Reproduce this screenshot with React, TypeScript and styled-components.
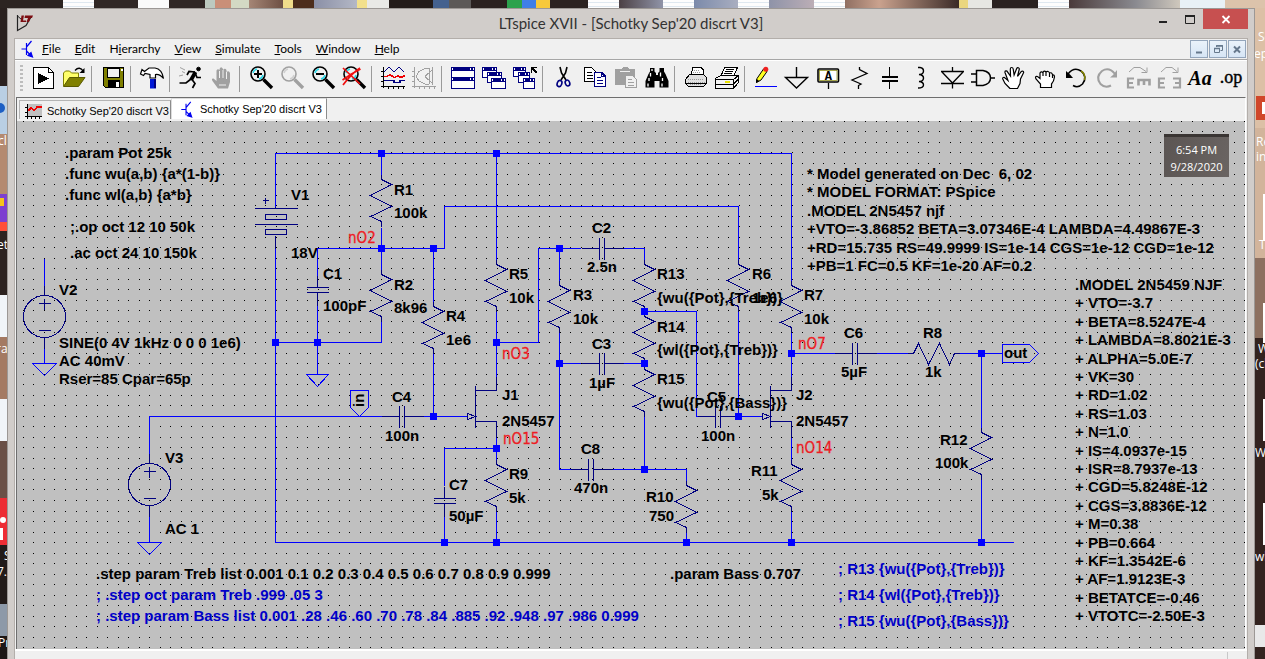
import React from "react";
import styled, { createGlobalStyle } from "styled-components";

const Global = createGlobalStyle`
  * { box-sizing: border-box; }
  body { margin: 0; background: #2b2320; font-family: "Open Sans", "Noto Sans", sans-serif; }
  button { font: inherit; color: inherit; margin: 0; padding: 0; border: 0; background: none; }
`;

/* ---------- desktop behind the window ---------- */

const Desktop = styled.div`
  display: grid;
  grid-template-columns: 7px minmax(0, 1fr) 10px;
  grid-template-rows: 8px minmax(0, 1fr);
  min-height: 100vh;
`;

const TopStrip = styled.div`
  grid-column: 1 / -1;
  display: flex;
  overflow: hidden;
`;

const Patch = styled.span<{ $span: number; $fill: string }>`
  flex: ${(p) => p.$span} 1 0;
  background: ${(p) => p.$fill};
`;

const SideStrip = styled.div`
  position: relative;
  overflow: hidden;
  svg { position: absolute; inset: 0; width: 100%; height: 100%; }
`;

const paper = "linear-gradient(#fdfdfd 0 2px, #dfe8f0 2px 3px, #fdfdfd 3px 6px, #dfe8f0 6px 7px, #fdfdfd 7px)";
const patches: [number, string][] = [
  [63, "#2c2421"], [31, paper], [44, "#302725"], [31, "#fafafa"], [36, "#2f2624"],
  [10, "#bcc9bf"], [16, "#c98f78"], [18, "#d3d9c4"], [34, "linear-gradient(90deg,#a58676,#6d4f43)"], [10, "#f0dc8a"], [21, "#4c2d1c"],
  [43, "linear-gradient(90deg,#8a8fa6,#b4b8c6)"], [10, "#f2e08c"], [22, "#e9e9e6"],
  [44, "#241c1a"], [16, "#44618e"], [22, "#5c5957"], [36, "#2a211f"],
  [15, "#2ba24c"], [14, "#3f7fe8"], [14, "#f7c93b"], [37, "#2b2220"],
  [31, paper], [44, "linear-gradient(90deg,#4b4044,#9094a8)"], [31, paper], [44, "linear-gradient(90deg,#7b8aaa,#a9aec0)"],
  [31, paper], [45, "linear-gradient(90deg,#8e93a8,#bcaeb6)"], [31, paper],
  [114, "linear-gradient(90deg,#8f6f62,#caa28e 30%,#3a2a26)"], [9, "#ead67f"], [24, "#e6e6e2"], [46, "#2a2220"], [31, paper],
  [111, "linear-gradient(90deg,#4a3a3a,#8a8a90 60%,#cfc8bd)"], [45, "#e8f1f6"], [40, "#dcc3ab"],
];

const DesktopText = styled.text`
  font: 12px "Open Sans", sans-serif;
  fill: #fff;
`;

function LeftEdge() {
  return (
    <svg aria-hidden="true">
      <rect width="7" height="78" fill="#2a211f" />
      <rect y="78" width="7" height="48" fill="#b9cfe4" />
      <circle cx="0" cy="100" r="5" fill="#1c5fc4" />
      <rect y="126" width="7" height="60" fill="#b48a70" />
      <rect y="186" width="7" height="40" fill="#7d3fd0" />
      <rect y="190" width="4" height="8" fill="#f5c21b" />
      <rect y="214" width="7" height="9" fill="#ff4f3a" />
      <rect y="223" width="7" height="64" fill="#2d2320" />
      <rect y="287" width="7" height="42" fill="#f1f5f9" />
      <rect y="329" width="7" height="62" fill="#a47a62" />
      <rect y="391" width="7" height="42" fill="#f1f5f9" />
      <rect y="433" width="7" height="57" fill="#6a5046" />
      <rect y="490" width="7" height="47" fill="#ed2d34" />
      <circle cx="3" cy="512" r="3" fill="#fff" />
      <rect y="520" width="3" height="12" fill="#fff" />
      <rect y="537" width="7" height="59" fill="#221b19" />
      <rect y="596" width="7" height="32" fill="#8d99a8" />
      <rect y="628" width="7" height="40" fill="#1d1716" />
      <DesktopText x="-2" y="137">cl</DesktopText>
      <DesktopText x="-3" y="241">et</DesktopText>
      <DesktopText x="-4" y="345">ra</DesktopText>
      <DesktopText x="4" y="552">S</DesktopText>
      <DesktopText x="-3" y="568">7.0</DesktopText>
      <DesktopText x="-2" y="639">Pr</DesktopText>
    </svg>
  );
}

function RightEdge() {
  return (
    <svg aria-hidden="true">
      <rect width="10" height="120" fill="#dcc0a6" />
      <rect y="120" width="10" height="130" fill="#d2b49b" />
      <rect y="250" width="10" height="80" fill="#8d7060" />
      <rect y="330" width="10" height="340" fill="#33231f" />
      <rect x="1" y="88" width="9" height="24" fill="#d0472a" />
      <rect x="7" y="94" width="3" height="12" fill="#fff" />
      <rect x="8" y="186" width="2" height="46" fill="#fff" />
      <rect x="8" y="295" width="2" height="40" fill="#fff" />
      <rect x="8" y="391" width="2" height="42" fill="#fff" />
      <rect x="8" y="495" width="2" height="42" fill="#fff" />
      <rect y="617" width="10" height="22" fill="#e9e9e9" />
      <DesktopText x="3" y="33">Se</DesktopText>
      <DesktopText x="-1" y="50">ep</DesktopText>
      <DesktopText x="1" y="138">Re</DesktopText>
      <DesktopText x="1" y="153">in</DesktopText>
      <DesktopText x="4" y="241">Ti</DesktopText>
      <DesktopText x="3" y="345">W</DesktopText>
      <DesktopText x="0" y="360">(cl</DesktopText>
      <DesktopText x="0" y="449">Wo</DesktopText>
      <DesktopText x="0" y="553">wh</DesktopText>
    </svg>
  );
}

/* ---------- window frame ---------- */

const Window = styled.main`
  display: flex;
  flex-direction: column;
  background: #d1cdca;
  border: 1px solid #9c9895;
  border-bottom: 0;
  padding: 0 6px;
`;

const TitleBar = styled.header`
  display: grid;
  grid-template-columns: 1fr auto 1fr;
  height: 29px;
  flex: none;
`;

const AppMark = styled.svg`
  width: 20px;
  height: 20px;
  margin: 4px 0 0 1px;
`;

const Title = styled.h1`
  margin: 0;
  font: 400 15px/29px "Lato", sans-serif;
  color: #333;
  white-space: nowrap;
`;

const WindowButtons = styled.div`
  display: flex;
  justify-content: flex-end;
  align-items: flex-start;
`;

const WindowButton = styled.button<{ $close?: boolean }>`
  width: ${(p) => (p.$close ? 45 : 27)}px;
  height: 20px;
  background: ${(p) => (p.$close ? "#c75050" : "transparent")};
  svg { display: block; margin: 0 auto; width: 20px; height: 20px; }
`;

const Client = styled.div`
  flex: 1;
  display: flex;
  flex-direction: column;
  min-height: 0;
  background: #f0f0f0;
  border: 1px solid #b3aeaa;
  border-bottom: 0;
`;

const MenuBar = styled.nav`
  display: flex;
  align-items: center;
  height: 21px;
  flex: none;
  padding: 0 1px 0 5px;
  border-bottom: 1px solid #a6a6a6;
`;

const MenuMark = styled.svg`
  width: 14px;
  height: 18px;
  margin-right: 1px;
`;

const MenuItem = styled.button`
  padding: 0 7px;
  font: 12px/18px "Lato", sans-serif;
  color: #000;
`;

const ChildButtons = styled.div`
  display: flex;
  gap: 1px;
  margin-left: auto;
`;

const ChildButton = styled.button`
  width: 18px;
  height: 18px;
  background: linear-gradient(#eaf2fa, #d6e5f5);
  border: 1px solid #93a5bb;
  svg { display: block; width: 16px; height: 16px; }
`;

const ToolBar = styled.div`
  display: flex;
  align-items: center;
  height: 37px;
  flex: none;
  border-top: 1px solid #fff;
`;

const Grip = styled.span`
  width: 3px;
  height: 28px;
  margin: 0 4px 0 5px;
  background: repeating-linear-gradient(#bdbdbd 0 2px, transparent 2px 4px);
`;

const ToolButton = styled.button`
  flex: none;
  width: 31px;
  height: 26px;
  svg { display: block; margin: 0 auto 2px; width: 24px; height: 24px; overflow: visible; }
`;

const Separator = styled.span`
  flex: none;
  width: 1px;
  height: 26px;
  margin: 0 5px 0 2px;
  background: #9a9a9a;
`;

const Sheet = styled.section`
  flex: 1;
  display: flex;
  flex-direction: column;
  margin: 0 1px;
  border-top: 1px solid #6e6e6e;
  border-left: 1px solid #6e6e6e;
  border-right: 1px solid #fff;
`;

const TabBar = styled.div`
  display: flex;
  align-items: flex-end;
  height: 23px;
  flex: none;
  padding: 0 2px 2px;
`;

const Tab = styled.button<{ $active?: boolean }>`
  display: flex;
  align-items: center;
  gap: 5px;
  height: ${(p) => (p.$active ? 21 : 19)}px;
  padding: ${(p) => (p.$active ? "0 4px 0 6px" : "2px 1px 0 5px")};
  background: ${(p) => (p.$active ? "#fff" : "#f0f0f0")};
  border: 1px solid ${(p) => (p.$active ? "#dcdcdc" : "#b4b4b4")};
  border-right-color: #8c8c8c;
  border-bottom: 0;
  font: 11px/16px "Liberation Sans", Arial, sans-serif;
  color: #000;
  white-space: nowrap;
  svg { width: 17px; height: 17px; }
`;

const Canvas = styled.div`
  position: relative;
  flex: 1;
  min-height: 527px;
  background: #c0c0c0;
  overflow: hidden;
`;

const Drawing = styled.svg`
  position: absolute;
  inset: 0;
  width: 100%;
  height: 100%;
`;

const Clock = styled.time`
  position: absolute;
  top: 13px;
  right: 16px;
  width: 65px;
  height: 43px;
  padding-top: 4px;
  border-top: 3px solid #3a3533;
  background: linear-gradient(100deg, #5b5553, #6a6462);
  color: #fff;
  font: 11px/17px "Open Sans", sans-serif;
  text-align: center;
`;

const StatusBar = styled.footer`
  display: flex;
  justify-content: flex-end;
  height: 10px;
  flex: none;
  border-top: 2px solid #fff;
  background: #f0f0f0;
`;

const StatusCell = styled.span`
  width: 20px;
  margin-top: 1px;
  border-left: 1px solid #c8c8c8;
`;

/* ---------- toolbar icons, on a 24 x 24 grid ---------- */

const K = "#000";
const NAVY = "#000080";
const OLIVE = "#808000";
const GRAY = "#a0a0a0";

const lens = (color: string, shine: string) => (
  <>
    <circle cx="9" cy="8" r="7" fill="none" stroke={color} strokeWidth="1.6" />
    <path d="M4 7a6 5 0 0 1 4-4M14 9a6 5 0 0 1-4 4" fill="none" stroke={shine} strokeWidth="1.5" />
    <path d="M14.5 13.5 23 22" stroke={color} strokeWidth="3.4" />
  </>
);

const win = (x: number, y: number, w: number, h: number) => (
  <>
    <rect x={x + 0.5} y={y + 0.5} width={w - 1} height={h - 1} fill="#fff" stroke={NAVY} />
    <rect x={x} y={y} width={w} height="4" fill={NAVY} />
    <path d={`M${x + 1.5} ${y + 1}v2M${x + w - 4.5} ${y + 1}v2M${x + w - 2} ${y + 1}v2`} stroke="#fff" />
  </>
);

const handOpen = "M8 22.5 3 17.5.8 13c-.6-1.6 1.4-2.2 2.4-.8L6 14.500 3 6.500c-.4-1.700 1.800-2.300 2.500-.6L8.500 10 8.300 3c0-2 2.600-2 2.900 0l.9 6 2.600-6.500c.7-1.600 3-.8 2.500 1l-1.700 7 3.700-4.800c1.200-1.400 3-.1 2.200 1.300L18.500 13l-.5 4.500-2.500 5z";

type Tool = { name: string; art: React.ReactNode; disabled?: boolean };

const groups: Tool[][] = [
  [
    { name: "Run", art: <g shapeRendering="crispEdges"><path d="M2.500 1.500H17.500L22.500 6.500V22.500H2.500Z" fill="#fff" stroke={K} /><path d="M17.500 1.500V6.500H22.500" fill="none" stroke={K} /><path d="M7 7 18 12.500 7 18Z" fill={K} /></g> },
    { name: "Open", art: <g><path d="M1.500 20V7l2-2h4l2 2h7v5" fill="#ffff6a" stroke={OLIVE} /><path d="M1.500 20.500 7.500 11.500H23L16.500 20.500Z" fill={OLIVE} stroke="#5a5a00" /><path d="M13 4.500Q17.500-.5 21.500 5.500" fill="none" stroke={K} strokeWidth="1.300" /><path d="M22.500 2v5h-5z" fill={K} /></g> },
  ],
  [
    { name: "Save", art: <g shapeRendering="crispEdges"><path d="M2.500 1.500H22.500V21.500H4.500L2.500 19.500Z" fill={OLIVE} stroke={K} /><rect x="6" y="2" width="12" height="9" fill="#f0f0f0" stroke={K} /><rect x="20" y="3" width="2" height="2" fill="#fff" /><rect x="7" y="14" width="12" height="8" fill={K} /><rect x="15" y="16" width="3" height="5" fill="#fff" /></g> },
  ],
  [
    { name: "Control panel", art: <g><path d="M.5 8 2 3.500 4.500 5.500 9 2H15Q22 3 23.500 12.500 20 8 15.500 8.500V12H10V8.500L5 7.500 3.500 9.500Z" fill="#fff" stroke={K} strokeWidth="1.200" /><path d="M10 13h6v9.500h-6z" fill="#0018d8" /><path d="M15 13v9" stroke={NAVY} strokeWidth="2" /></g> },
  ],
  [
    { name: "Simulate", art: <g fill="none" stroke={K}><circle cx="19.500" cy="3" r="1.800" fill={K} /><path d="M16.500 6 12 14" strokeWidth="3.800" /><path d="M16 6 10 5.500 8 9M16.500 8 18 11.500H22M12 13 7 17H.5M13 13.500 16 17.500 13.500 22" strokeWidth="1.700" /><path d="M1 1.500 6 4M3 5.500 6 7M0 10l4-1" stroke={GRAY} /></g> },
    { name: "Halt", disabled: true, art: <g><path d="M8 22.500 2.500 15Q1 12 3.500 12.500L6.500 15V4.500q1.500-2.500 3 0V3q1.500-3.500 3.500 0v1q2-2.500 3.500 0V6q2.500-2 3.500 1V16L18 22.500Z" fill={GRAY} /><path d="M9.500 5v7M13 4v8M16.500 6v7M9 19h7" stroke="#f0f0f0" /></g> },
  ],
  [
    { name: "Zoom in", art: <g>{lens(K, "#28d8e8")}<path d="M5 8h8M9 4v8" stroke={K} strokeWidth="2" /></g> },
    { name: "Pan", disabled: true, art: lens(GRAY, "#d0d0d0") },
    { name: "Zoom out", art: <g>{lens(K, "#28d8e8")}<path d="M5 8h8" stroke={K} strokeWidth="2" /></g> },
    { name: "Zoom to fit", art: <g>{lens(K, "#28d8e8")}<path d="M1 2 18 18M18 2Q10 7 1 19M.5 14l9-6 9-5" fill="none" stroke="#f01010" strokeWidth="1.700" /></g> },
  ],
  [
    { name: "Autorange", art: <g fill="none" shapeRendering="crispEdges"><path d="M2.500 1V22M0 20.500H24M0 5.500H3M0 10.500H3M0 15.500H3M7.500 20V23M12.500 20V23M17.500 20V23M22.500 20V23" stroke={K} /><path d="M3 6 8 1 13 6 18 1 23 6" stroke={NAVY} /><path d="M3 10.500H6L9 8.500 13 11.500 17 10 20 11.500 24 9.500" stroke="#f00000" strokeWidth="1.500" /><path d="M3 14.500H13V16.500H19V14.500H24" stroke={NAVY} strokeWidth="1.500" /></g> },
    { name: "FFT", disabled: true, art: <g fill="none" stroke={GRAY} shapeRendering="crispEdges"><path d="M2.500 1V22M0 20.500H24M0 5.500H3M0 10.500H3M0 15.500H3M7.500 20V23M12.500 20V23M17.500 20V23M22.500 20V23M4 10.500 7 5.500 13 2.500H17M4 10.500 7 15 13 18H17M17.500 2V18M20.500 1V19M13 10.500 20 4M13 10.500 20 17" /></g> },
  ],
  [
    { name: "Tile windows", art: <g shapeRendering="crispEdges">{win(0, 1, 24, 11)}{win(0, 11, 24, 12)}</g> },
    { name: "Cascade windows", art: <g shapeRendering="crispEdges">{win(0, 1, 15, 11)}{win(5, 6, 15, 11)}{win(9, 12, 15, 11)}</g> },
    { name: "Close windows", art: <g shapeRendering="crispEdges">{win(0, 1, 13, 10)}{win(5, 6, 12, 11)}{win(10, 12, 12, 11)}<path d="M18.500 7V1.500H24M19 2l5 5" stroke={K} strokeWidth="1.500" fill="none" /></g> },
  ],
  [
    { name: "Cut", art: <g fill="none"><path d="M8 1 9.500 7 14 14M15 1 13.500 7 9 14" stroke={K} strokeWidth="1.600" /><ellipse cx="7.500" cy="17.500" rx="2.300" ry="3.200" stroke={NAVY} strokeWidth="1.600" transform="rotate(20 7.500 17.500)" /><ellipse cx="15.500" cy="17" rx="2.200" ry="3" stroke={NAVY} strokeWidth="1.600" transform="rotate(-20 15.500 17)" /></g> },
    { name: "Copy", art: <g shapeRendering="crispEdges"><path d="M1.500 1.500H8.500L12.500 5.500V15.500H1.500Z" fill="#fff" stroke={K} /><path d="M4 6.500h5M4 9.500h6M4 12.500h6" stroke={K} /><path d="M11.500 6.500H18.500L22.500 10.500V20.500H11.500Z" fill="#fff" stroke={NAVY} strokeWidth="1.500" /><path d="M18.500 6.500V10.500H22.500M14 11.500h4M14 14.500h6M14 17.500h6" stroke={NAVY} fill="none" /></g> },
    { name: "Paste", disabled: true, art: <g shapeRendering="crispEdges"><path d="M1 3H7L9 1H13L15 3H21V19H1Z" fill={GRAY} /><path d="M6 5.500h10" stroke="#f0f0f0" /><path d="M11.500 9.500H18.500L22.500 13.500V21.500H11.500Z" fill="#f0f0f0" stroke={GRAY} /><path d="M14 13.500h4M14 16.500h6M14 19h6" stroke={GRAY} /></g> },
    { name: "Find", art: <g><path d="M5 2H9.500V5.500L11 7V9H13V7L14.500 5.500V2H19V5.500L20.500 8 23.500 15V21.500H14.500V15H9.500V21.500H.5V15L3.500 8 5 5.500Z" fill={K} /><path d="M5.500 7v3.500M4 12v3M3 17.500v3M15.500 6.500v4M17.500 12v3M17 17.500v3M7 3v2" stroke="#fff" strokeWidth="1.300" /></g> },
  ],
  [
    { name: "Print preview", art: <g shapeRendering="crispEdges"><path d="M7 8.500 9 1.500H17L19.500 4V10" fill="#fff" stroke={K} /><path d="M1.500 13.500 5.500 8.500H19.500L22.500 11.500V17.500L19.500 20.500H4.500L1.500 17.500Z" fill="#e0e0e0" stroke={K} /><path d="M4 13.500H20M4 16.500H21M6 18.500H18M10 4.500h6M9 6.500h7" stroke="#9a9a9a" strokeDasharray="1 1" /><path d="M2 17.500H22" stroke={K} /></g> },
    { name: "Print", art: <g shapeRendering="crispEdges"><path d="M6 10 9.500 1.500H22.500L18.500 10" fill="#fff" stroke={K} /><path d="M.5 12.500 5.500 9.500H23.500V16.500L18.500 22.500H.5Z" fill="#f4f4f4" stroke={K} /><path d="M.5 13.500H18.500L23.500 9.500M18.500 13.500V22M11 3.500h8M10 5.500h8M9 7.500h8M.5 18.500H18L23 13.500" stroke={K} fill="none" /><rect x="10" y="15" width="5" height="2" fill="#e8e000" /></g> },
  ],
  [
    { name: "Wire", art: <g><path d="M2.500 16.500 3 12.500 9.500 3 13 5.500 7 14Z" fill="#ffff20" stroke={K} /><path d="M2 17v-4l3.500 2z" fill={K} /><circle cx="11.800" cy="3.200" r="2.500" fill="#f02020" /><path d="M1 20.500H23" stroke="#0000ff" shapeRendering="crispEdges" /></g> },
    { name: "Ground", art: <path d="M11.500 1V11.500M.5 11.500H22.500L11.500 22Z" fill="none" stroke={K} strokeWidth="1.400" /> },
    { name: "Label net", art: <g><rect x="2" y="3" width="20.500" height="13" rx="1" fill="#fff" stroke={K} strokeWidth="1.600" /><rect x="3.500" y="4.500" width="17.500" height="10" fill="none" stroke={OLIVE} strokeWidth=".7" /><text x="12.300" y="14" fontFamily="Liberation Mono" fontWeight="700" fontSize="12" textAnchor="middle">A</text><path d="M12.500 17v6" stroke={K} strokeWidth="1.300" /></g> },
    { name: "Resistor", art: <path d="M12.500 1V3.500L20 7.500 5 14 14 18 11.500 19.500V23" fill="none" stroke={K} strokeWidth="1.300" /> },
    { name: "Capacitor", art: <g stroke={K} shapeRendering="crispEdges"><path d="M4 11H20M4 15H20" strokeWidth="2" /><path d="M11.500 1V10M11.500 16V23" /></g> },
    { name: "Inductor", art: <path d="M9 1.500H11Q14.500 2 14.500 5T11 8.500H10Q14.500 9 14.500 12T11 15.500H10Q14.500 16 14.500 19T9 22" fill="none" stroke={K} strokeWidth="1.400" /> },
    { name: "Diode", art: <path d="M1 5.500H24M2 6 12.500 17 23 6M1 17.500H24M12.500 1V5.500M12.500 17V22.500" fill="none" stroke={K} strokeWidth="1.300" /> },
    { name: "Component", art: <path d="M5.500 4.500H12Q19.500 6 19.500 12T12 19.500H5.500ZM0 8H5M0 16H5M19 12H24" fill="none" stroke={K} strokeWidth="1.500" /> },
    { name: "Move", art: <path d={handOpen} fill="#fff" stroke={K} strokeWidth="1.200" /> },
    { name: "Drag", art: <path d="M7.500 21.500V18L3 13Q1.500 10 4.500 10.500L7 12.500V7Q8 5 10 6.500 11 4 13 6 15.500 4.500 16.500 7 19 6 19.500 9 21.500 8.500 21.500 11 21 15 18.500 18V21.500ZM10 6.500V10M13 6V10M16.500 7V11M19.500 9V12" fill="#fff" stroke={K} strokeWidth="1.200" /> },
    { name: "Undo", art: <g fill="none"><path d="M4 8Q10 .5 17 5 24 11 18.500 18 14 22.500 9 19.500" stroke={K} strokeWidth="1.500" /><path d="M17 5Q22 8 20.500 14" stroke={OLIVE} strokeWidth="1.500" /><path d="M2 5V12H9L6.500 9Z" fill={K} /></g> },
    { name: "Redo", disabled: true, art: <g fill="none"><path d="M20 8Q14 .5 7 5 0 11 5.500 18 10 22.500 16 19.500" stroke={GRAY} strokeWidth="2" /><path d="M22 4V11.500H15L18 9Z" fill={GRAY} /></g> },
    { name: "Rotate", disabled: true, art: <g fill="none" stroke={GRAY}><path d="M8 12.500H2V21.500H8M2 17H7" strokeWidth="2.200" /><path d="M12.500 19.500V14H23.500V19.500M18 14V19" strokeWidth="2.600" /><path d="M3 6 8 1.500H14L20 5.500M21 1.500V6.500H15.500" /></g> },
    { name: "Mirror", disabled: true, art: <g fill="none" stroke={GRAY}><path d="M8 12.500H2V21.500H8M2 17H7M16 12.500H23V21.500H16M23 17H18" strokeWidth="2.200" /><path d="M4 6 9 1.500H15L20 5.500M21 1.500V6.500H15.500" /></g> },
    { name: "Text", art: <text x="12" y="19" fontFamily="Liberation Serif" fontStyle="italic" fontWeight="700" fontSize="20" textAnchor="middle">Aa</text> },
    { name: "SPICE directive", art: <text x="12" y="17" fontFamily="Liberation Serif" fontSize="18" stroke={K} strokeWidth=".4" textAnchor="middle">.op</text> },
  ],
];

const transistor = (
  <g fill="none" stroke="#0000f0" strokeWidth="1.200">
    <path d="M1 9H6M6 3V15M6 7 11 1M6 11 10 15" />
    <path d="M12 17 7.500 15.500 10.500 12.500Z" fill="#0000f0" />
  </g>
);

/* ---------- schematic ---------- */

const STEP = 10.53;
const dots: string[] = [];
for (let j = 0; j < 90; j++) {
  for (let i = 0; i < 180; i++) {
    dots.push(`M${Math.floor(6.400 + i * STEP)} ${Math.floor(0.400 + j * STEP)}h1v1h-1z`);
  }
}
const gridPath = dots.join("");

const wires = [
  "M275 207V153H791V280", "M275 248V542H1013", "M381 153V174", "M381 227V269", "M381 321V342H275",
  "M317 275V248H444V206H738V259", "M317 304V374", "M433 248V301", "M433 353V416",
  "M496 153V259", "M496 311V376", "M496 342H538V248H580", "M623 248H644V259",
  "M559 248V280", "M559 332V469H572", "M559 363H580", "M623 363H644",
  "M644 306V316", "M644 311H696V416H706", "M644 358V369", "M644 416V469", "M612 469H686V480",
  "M686 532V542", "M738 311V416", "M731 416H762", "M791 332V376", "M791 353H836", "M872 353H907",
  "M959 353H1002", "M981 353V427", "M981 479V542", "M791 437V459", "M791 511V542",
  "M496 437V459", "M496 511V542", "M496 448H444V485", "M444 516V542",
  "M149 453V416H382", "M422 416H467", "M149 516V542", "M44 258V285", "M44 345V363",
  "M306 374H328L317 386Z", "M137 542H161L149 554Z", "M32 363H56L44 375Z",
  "M1002 344H1029L1038 353L1029 362H1002Z", "M350 390H368V407L359 416L350 407Z",
].join("");

const resistors: [number, number][] = [
  [381, 179], [381, 274], [433, 306], [496, 264], [559, 285], [644, 264], [644, 316], [644, 369],
  [738, 264], [791, 285], [496, 464], [791, 464], [686, 485], [981, 432],
];
const capsAcross: [number, number][] = [[599, 248], [599, 363], [588, 469], [715, 416], [852, 353], [399, 416]];
const capsUpright: [number, number][] = [[317, 287], [444, 498]];
const jfets: [number, number][] = [[475, 416], [770, 416]];
const sources: [number, number][] = [[44, 316], [149, 484]];

const symbols = [
  ...resistors.map(([x, y]) => `M${x} ${y - 5}v5l10 5l-21 11l21 11l-21 10l11 5v5`),
  ...capsAcross.map(([x, y]) => `M${x - 18} ${y}h18M${x} ${y - 11}v22M${x + 5} ${y - 11}v22M${x + 5} ${y}h19`),
  ...capsUpright.map(([x, y]) => `M${x} ${y - 12}v12M${x - 11} ${y}h22M${x - 11} ${y + 5}h22M${x} ${y + 5}v13`),
  ...jfets.map(([x, y]) => `M${x} ${y - 31}v42M${x} ${y - 26}h21v-14M${x} ${y + 5}h21v16M${x - 8} ${y - 3}v6l8 -3z`),
  ...sources.map(([x, y]) => `M${x} ${y - 31}v10M${x - 6} ${y - 13}h12M${x} ${y - 18}v11M${x - 6} ${y + 14}h12M${x} ${y + 21}v11`),
  "M254 208H297M254 224H297M265 214H286V219H265ZM265 229H286V234H265ZM275 206V208M275 235V248M262 200H268M265 197V203",
  "M907 353H913L918 343L928 364L939 343L949 364L954 353H959",
].join("");

const nodes: [number, number][] = [
  [381, 153], [496, 153], [381, 248], [433, 248], [559, 248], [275, 342], [317, 342], [496, 342],
  [644, 311], [559, 363], [644, 363], [791, 353], [981, 353], [433, 416], [738, 416], [496, 448],
  [644, 469], [444, 542], [496, 542], [686, 542], [791, 542], [981, 542],
];

type Label = [number, number, string];

const labels: Label[] = [
  [65, 158, ".param Pot 25k"], [65, 179, ".func wu(a,b) {a*(1-b)}"], [65, 200, ".func wl(a,b) {a*b}"],
  [70, 232, ";.op oct 12 10 50k"], [70, 258, ".ac oct 24 10 150k"],
  [59, 295, "V2"], [59, 348, "SINE(0 4V 1kHz 0 0 0 1e6)"], [59, 366, "AC 40mV"], [59, 384, "Rser=85 Cpar=65p"],
  [291, 200, "V1"], [291, 258, "18V"], [394, 195, "R1"], [394, 218, "100k"], [323, 279, "C1"], [323, 311, "100pF"],
  [394, 290, "R2"], [394, 313, "8k96"], [446, 321, "R4"], [446, 345, "1e6"], [509, 279, "R5"], [509, 303, "10k"],
  [502, 400, "J1"], [502, 426, "2N5457"], [392, 402, "C4"], [385, 441, "100n"],
  [509, 479, "R9"], [509, 503, "5k"], [449, 490, "C7"], [449, 521, "50µF"],
  [592, 233, "C2"], [587, 272, "2.5n"], [573, 300, "R3"], [573, 324, "10k"], [592, 349, "C3"], [589, 388, "1µF"],
  [657, 279, "R13"], [657, 303, "{wu({Pot},{Treb})}"], [657, 332, "R14"], [657, 355, "{wl({Pot},{Treb})}"],
  [657, 384, "R15"], [657, 408, "{wu({Pot},{Bass})}"], [752, 279, "R6"], [752, 303, "1e6"],
  [707, 402, "C5"], [701, 441, "100n"], [804, 300, "R7"], [804, 324, "10k"], [796, 400, "J2"], [796, 426, "2N5457"],
  [581, 454, "C8"], [574, 493, "470n"], [646, 502, "R10"], [649, 521, "750"], [751, 476, "R11"], [762, 500, "5k"],
  [844, 338, "C6"], [841, 377, "5µF"], [923, 338, "R8"], [925, 377, "1k"], [1004, 358, "out"],
  [940, 445, "R12"], [935, 468, "100k"], [165, 463, "V3"], [165, 534, "AC 1"],
  [96, 579, ".step param Treb list 0.001 0.1 0.2 0.3 0.4 0.5 0.6 0.7 0.8 0.9 0.999"],
  [670, 579, ".param Bass 0.707"],
];

const comments: Label[] = [
  [96, 600, "; .step oct param Treb .999 .05 3"],
  [96, 621, "; .step param Bass list 0.001 .28 .46 .60 .70 .78 .84 .885 .92 .948 .97 .986 0.999"],
  [838, 574, "; R13 {wu({Pot},{Treb})}"], [838, 600, "; R14 {wl({Pot},{Treb})}"], [838, 626, "; R15 {wu({Pot},{Bass})}"],
];

const netNames: Label[] = [[348, 243, "nO2"], [502, 359, "nO3"], [503, 444, "nO15"], [798, 349, "nO7"], [796, 453, "nO14"]];

const modelA = [
  "* Model generated on Dec  6, 02", "* MODEL FORMAT: PSpice", ".MODEL 2N5457 njf",
  "+VTO=-3.86852 BETA=3.07346E-4 LAMBDA=4.49867E-3",
  "+RD=15.735 RS=49.9999 IS=1e-14 CGS=1e-12 CGD=1e-12", "+PB=1 FC=0.5 KF=1e-20 AF=0.2",
];
const modelB = [
  ".MODEL 2N5459 NJF", "+ VTO=-3.7", "+ BETA=8.5247E-4", "+ LAMBDA=8.8021E-3", "+ ALPHA=5.0E-7", "+ VK=30",
  "+ RD=1.02", "+ RS=1.03", "+ N=1.0", "+ IS=4.0937e-15", "+ ISR=8.7937e-13", "+ CGD=5.8248E-12", "+ CGS=3.8836E-12",
  "+ M=0.38", "+ PB=0.664", "+ KF=1.3542E-6", "+ AF=1.9123E-3", "+ BETATCE=-0.46", "+ VTOTC=-2.50E-3",
];
const stack = (x: number, y: number, lines: string[]): Label[] =>
  lines.map((t, i) => [x, Math.round(y + (i * 92) / 5), t]);

const Note = styled.text<{ $color?: string }>`
  font: 700 15px "Liberation Sans", Arial, sans-serif;
  fill: ${(p) => p.$color ?? "#000"};
  white-space: pre;
`;

const NetName = styled.text`
  font: 15px "DejaVu Sans Condensed", "DejaVu Sans", sans-serif;
  fill: #ed1c24;
  stroke: #ed1c24;
  stroke-width: 0.3;
`;

function Schematic() {
  return (
    <Drawing role="img" aria-label="Schematic">
      <path d={gridPath} fill="#000" shapeRendering="crispEdges" />
      <g transform="translate(-17 -121)">
        <g transform="translate(.5 .5)" fill="none" shapeRendering="crispEdges">
          <path d={wires} stroke="#0000ff" />
          <path d={symbols} stroke={NAVY} />
          {sources.map(([x, y]) => <circle key={x} cx={x} cy={y} r="21" stroke={NAVY} />)}
        </g>
        {nodes.map(([x, y]) => <rect key={`${x}-${y}`} x={x - 3} y={y - 3} width="7" height="7" fill="#0000ff" />)}
        {[...labels, ...stack(807, 179, modelA), ...stack(1075, 290, modelB)].map(([x, y, t], i) => (
          <Note key={i} x={x} y={y}>{t}</Note>
        ))}
        <Note transform="translate(364 407) rotate(-90)">in</Note>
        {comments.map(([x, y, t]) => <Note key={t} x={x} y={y} $color="#0000c8">{t}</Note>)}
        {netNames.map(([x, y, t]) => <NetName key={t} x={x} y={y}>{t}</NetName>)}
      </g>
    </Drawing>
  );
}

const menus = ["File", "Edit", "Hierarchy", "View", "Simulate", "Tools", "Window", "Help"];

function MenuLabel({ text }: { text: string }) {
  const at = text === "Hierarchy" ? 1 : 0;
  return <>{text.slice(0, at)}<u>{text[at]}</u>{text.slice(at + 1)}</>;
}

export default function App() {
  return (
    <>
      <Global />
      <Desktop>
        <TopStrip aria-hidden="true">
          {patches.map(([span, fill], i) => <Patch key={i} $span={span} $fill={fill} />)}
        </TopStrip>
        <SideStrip><LeftEdge /></SideStrip>
        <Window>
          <TitleBar>
            <AppMark viewBox="0 0 20 20" aria-hidden="true">
              <path d="M2.500 2V17.500L11 12.500 16 4" fill="none" stroke="#222" strokeWidth="1.200" />
              <path d="M2 2.500 7 7" stroke="#222" />
              <path d="M6.500 2.500H9L8 7.500H11V9H5.500ZM10 2.500H18L17 5H15.500L14 9H11.500L13 5H9.500Z" fill="#7c0d12" />
            </AppMark>
            <Title>LTspice XVII - [Schotky Sep'20 discrt V3]</Title>
            <WindowButtons>
              <WindowButton aria-label="Minimize"><svg viewBox="0 0 20 20"><path d="M6 13h8" stroke="#222" strokeWidth="2" /></svg></WindowButton>
              <WindowButton aria-label="Maximize"><svg viewBox="0 0 20 20"><path d="M5.500 7V14.500H14.500V7" fill="none" stroke="#222" /><path d="M5 7h10" stroke="#222" strokeWidth="2" /></svg></WindowButton>
              <WindowButton $close aria-label="Close"><svg viewBox="0 0 20 20"><path d="M6.500 7 13.500 14M13.500 7 6.500 14" stroke="#fff" strokeWidth="1.800" /></svg></WindowButton>
            </WindowButtons>
          </TitleBar>
          <Client>
            <MenuBar>
              <MenuMark viewBox="0 0 13 18" aria-hidden="true">{transistor}</MenuMark>
              {menus.map((m) => <MenuItem key={m}><MenuLabel text={m} /></MenuItem>)}
              <ChildButtons>
                <ChildButton aria-label="Minimize sheet"><svg viewBox="0 0 16 16"><path d="M5 11.500h6" stroke="#66788c" strokeWidth="2" /></svg></ChildButton>
                <ChildButton aria-label="Restore sheet"><svg viewBox="0 0 16 16"><path d="M6.500 6V4.500H12.500V9.500H10.500M4.500 7.500H9.500V11.500H4.500Z" fill="none" stroke="#66788c" /><path d="M6 5h7M4 7.500h6" stroke="#66788c" strokeWidth="1.500" /></svg></ChildButton>
                <ChildButton aria-label="Close sheet"><svg viewBox="0 0 16 16"><path d="M5 5.500 11 11.500M11 5.500 5 11.500" stroke="#66788c" strokeWidth="2" /></svg></ChildButton>
              </ChildButtons>
            </MenuBar>
            <ToolBar role="toolbar" aria-label="Schematic tools">
              <Grip />
              {groups.map((tools, g) => (
                <React.Fragment key={g}>
                  {g > 0 && <Separator />}
                  {tools.map((t) => (
                    <ToolButton key={t.name} aria-label={t.name} disabled={t.disabled}>
                      <svg viewBox="0 0 24 24">{t.art}</svg>
                    </ToolButton>
                  ))}
                </React.Fragment>
              ))}
            </ToolBar>
            <Sheet>
              <TabBar role="tablist">
                <Tab role="tab" aria-selected="false">
                  <svg viewBox="0 0 17 17" shapeRendering="crispEdges">
                    <rect x="2" y="1" width="15" height="13" fill="#c0c0c0" />
                    <path d="M2.500 1V16M0 13.500H17M0 4.500H3M0 9.500H3M6.500 13V16M10.500 13V16M14.500 13V16" stroke="#000" />
                    <path d="M3 8 6 5 9 7.500 12 4 17 4" stroke="#f00000" strokeWidth="1.500" fill="none" />
                  </svg>
                  Schotky Sep'20 discrt V3
                </Tab>
                <Tab role="tab" aria-selected="true" $active>
                  <svg viewBox="0 0 13 18">{transistor}</svg>
                  Schotky Sep'20 discrt V3
                </Tab>
              </TabBar>
              <Canvas>
                <Schematic />
                <Clock dateTime="2020-09-28T18:54">6:54 PM<br />9/28/2020</Clock>
              </Canvas>
            </Sheet>
            <StatusBar><StatusCell /></StatusBar>
          </Client>
        </Window>
        <SideStrip><RightEdge /></SideStrip>
      </Desktop>
    </>
  );
}
